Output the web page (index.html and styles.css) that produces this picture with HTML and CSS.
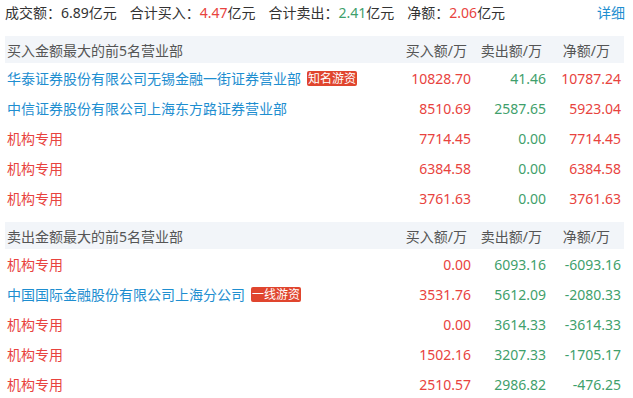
FILE: index.html
```html
<!DOCTYPE html>
<html lang="zh-CN">
<head>
<meta charset="utf-8">
<link rel="stylesheet" href="styles.css">
</head>
<body>
<div class="wrap">
  <div class="summary">
    <span class="item">成交额：6.89亿元</span>
    <span class="item">合计买入：<span class="red">4.47</span>亿元</span>
    <span class="item">合计卖出：<span class="green">2.41</span>亿元</span>
    <span class="item">净额：<span class="red">2.06</span>亿元</span>
    <a class="detail">详细</a>
  </div>

  <div class="table">
    <div class="head">
      <div class="name">买入金额最大的前5名营业部</div>
      <div class="h1">买入额/万</div>
      <div class="h2">卖出额/万</div>
      <div class="h3">净额/万</div>
    </div>
    <div class="row">
      <div class="name blue">华泰证券股份有限公司无锡金融一街证券营业部<span class="tag">知名游资</span></div>
      <div class="num red">10828.70</div><div class="num green">41.46</div><div class="num red">10787.24</div>
    </div>
    <div class="row">
      <div class="name blue">中信证券股份有限公司上海东方路证券营业部</div>
      <div class="num red">8510.69</div><div class="num green">2587.65</div><div class="num red">5923.04</div>
    </div>
    <div class="row">
      <div class="name red">机构专用</div>
      <div class="num red">7714.45</div><div class="num green">0.00</div><div class="num red">7714.45</div>
    </div>
    <div class="row">
      <div class="name red">机构专用</div>
      <div class="num red">6384.58</div><div class="num green">0.00</div><div class="num red">6384.58</div>
    </div>
    <div class="row">
      <div class="name red">机构专用</div>
      <div class="num red">3761.63</div><div class="num green">0.00</div><div class="num red">3761.63</div>
    </div>
  </div>

  <div class="table second">
    <div class="head">
      <div class="name">卖出金额最大的前5名营业部</div>
      <div class="h1">买入额/万</div>
      <div class="h2">卖出额/万</div>
      <div class="h3">净额/万</div>
    </div>
    <div class="row">
      <div class="name red">机构专用</div>
      <div class="num red">0.00</div><div class="num green">6093.16</div><div class="num green">-6093.16</div>
    </div>
    <div class="row">
      <div class="name blue">中国国际金融股份有限公司上海分公司<span class="tag">一线游资</span></div>
      <div class="num red">3531.76</div><div class="num green">5612.09</div><div class="num green">-2080.33</div>
    </div>
    <div class="row">
      <div class="name red">机构专用</div>
      <div class="num red">0.00</div><div class="num green">3614.33</div><div class="num green">-3614.33</div>
    </div>
    <div class="row">
      <div class="name red">机构专用</div>
      <div class="num red">1502.16</div><div class="num green">3207.33</div><div class="num green">-1705.17</div>
    </div>
    <div class="row">
      <div class="name red">机构专用</div>
      <div class="num red">2510.57</div><div class="num green">2986.82</div><div class="num green">-476.25</div>
    </div>
  </div>
</div>
</body>
</html>
```

FILE: styles.css
```css
html, body {
  margin: 0;
  padding: 0;
  background: #fff;
}
body {
  font-family: "Noto Sans", "Noto Sans CJK SC", sans-serif;
  font-size: 14px;
  color: #333;
}
.wrap {
  margin-left: 5px;
  width: 619px;
}
.summary {
  display: flex;
  align-items: center;
  height: 26px;
  line-height: 26px;
  margin-bottom: 10px;
  white-space: nowrap;
}
.summary .item {
  margin-right: 13px;
}
.detail {
  margin-left: auto;
  margin-right: -1px;
  color: #1e8ed0;
}
.red { color: #e8433e; }
.green { color: #3f9f6c; }
.blue { color: #1e8ed0; }

.table.second {
  margin-top: 9px;
}
.head, .row {
  display: grid;
  grid-template-columns: 1fr 75px 75px 75px;
  align-items: center;
  white-space: nowrap;
}
.head {
  height: 27px;
  background: #f2f5f9;
  color: #555;
}
.row {
  height: 30px;
}
.name {
  padding-left: 2px;
  display: flex;
  align-items: center;
}
.head .h1, .head .h2, .head .h3 {
  text-align: right;
  padding-right: 7px;
}
.head .h3 {
  padding-right: 14px;
}
.num {
  text-align: right;
  padding-right: 3px;
}
.tag {
  display: inline-block;
  margin-left: 6px;
  padding: 0 1px;
  background: #e0452e;
  color: #fff;
  font-size: 12px;
  line-height: 15px;
  border-radius: 2px;
}
```
